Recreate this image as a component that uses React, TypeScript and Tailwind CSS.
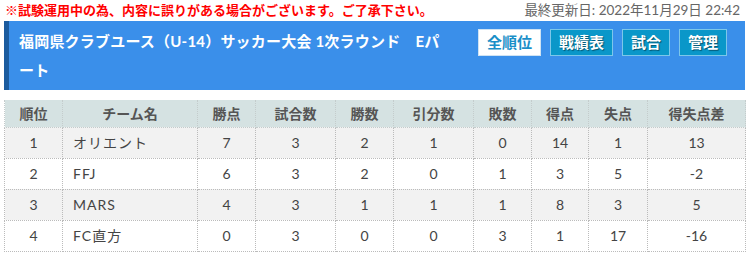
import React from 'react';

type Row = {
  rank: number;
  team: string;
  points: number;
  played: number;
  won: number;
  drawn: number;
  lost: number;
  gf: number;
  ga: number;
  gd: number;
};

const rows: Row[] = [
  { rank: 1, team: 'オリエント', points: 7, played: 3, won: 2, drawn: 1, lost: 0, gf: 14, ga: 1, gd: 13 },
  { rank: 2, team: 'FFJ', points: 6, played: 3, won: 2, drawn: 0, lost: 1, gf: 3, ga: 5, gd: -2 },
  { rank: 3, team: 'MARS', points: 4, played: 3, won: 1, drawn: 1, lost: 1, gf: 8, ga: 3, gd: 5 },
  { rank: 4, team: 'FC直方', points: 0, played: 3, won: 0, drawn: 0, lost: 3, gf: 1, ga: 17, gd: -16 },
];

const columns = ['順位', 'チーム名', '勝点', '試合数', '勝数', '引分数', '敗数', '得点', '失点', '得失点差'];
const widths = [58, 135, 58, 80, 58, 80, 58, 57, 59, 98];

const font = { fontFamily: 'Lato, "Noto Sans CJK JP", sans-serif' };

const NavButton: React.FC<{ label: string; active?: boolean }> = ({ label, active }) =>
  active ? (
    <button className="h-[27px] px-[8px] bg-white border border-[#cfe3f3] text-[#1a8fc8] text-[15px] font-bold leading-none">
      {label}
    </button>
  ) : (
    <button className="h-[27px] px-[8px] bg-[#0a97c9] border border-[#7cc7ea] text-white text-[15px] font-bold leading-none [text-shadow:1px_1px_1px_rgba(0,0,0,0.45)]">
      {label}
    </button>
  );

export default function App() {
  return (
    <div className="w-[750px] h-[257px] bg-white overflow-hidden" style={font}>
      {/* notice + updated */}
      <div className="h-[21px] flex items-center justify-between pl-[5px] pr-[10px]">
        <span className="text-[13px] font-bold text-[#ff0000] leading-none">
          ※試験運用中の為、内容に誤りがある場合がございます。ご了承下さい。
        </span>
        <span className="text-[13.5px] text-[#666666] leading-none">最終更新日: 2022年11月29日 22:42</span>
      </div>

      {/* title bar */}
      <div className="ml-[4px] w-[741px] h-[69px] bg-[#3a8fea] border-l-[5px] border-[#1b5b9e] flex justify-between pl-[10px] pr-[18px]">
        <h1 className="w-[428px] pt-[6px] text-white text-[15px] font-bold leading-[29px] tracking-[0.2px]">
          福岡県クラブユース（U-14）サッカー大会 1次ラウンド　Eパート
        </h1>
        <div className="flex gap-[9px] pt-[8px] items-start">
          <NavButton label="全順位" active />
          <NavButton label="戦績表" />
          <NavButton label="試合" />
          <NavButton label="管理" />
        </div>
      </div>

      {/* standings */}
      <table className="mt-[10px] ml-[4px] w-[741px] table-fixed border-collapse text-[14px]">
        <colgroup>
          {widths.map((w, i) => (
            <col key={i} style={{ width: w }} />
          ))}
        </colgroup>
        <thead>
          <tr className="h-[27px] bg-[#d5e2e2]">
            {columns.map((c) => (
              <th
                key={c}
                className="font-bold text-[#555555] text-center border border-dotted border-[#c4cccc] border-t-0"
              >
                {c}
              </th>
            ))}
          </tr>
        </thead>
        <tbody>
          {rows.map((r, i) => (
            <tr key={r.rank} className={i % 2 === 0 ? 'h-[31px] bg-[#f2f2f2]' : 'h-[31px] bg-white'}>
              <td className="text-center text-[#444444] border border-dotted border-[#bbbbbb]">{r.rank}</td>
              <td className="text-left pl-[10px] text-[#444444] border border-dotted border-[#bbbbbb] tracking-[1px]">{r.team}</td>
              <td className="text-center text-[#444444] border border-dotted border-[#bbbbbb]">{r.points}</td>
              <td className="text-center text-[#444444] border border-dotted border-[#bbbbbb]">{r.played}</td>
              <td className="text-center text-[#444444] border border-dotted border-[#bbbbbb]">{r.won}</td>
              <td className="text-center text-[#444444] border border-dotted border-[#bbbbbb]">{r.drawn}</td>
              <td className="text-center text-[#444444] border border-dotted border-[#bbbbbb]">{r.lost}</td>
              <td className="text-center text-[#444444] border border-dotted border-[#bbbbbb]">{r.gf}</td>
              <td className="text-center text-[#444444] border border-dotted border-[#bbbbbb]">{r.ga}</td>
              <td className="text-center text-[#444444] border border-dotted border-[#bbbbbb]">{r.gd}</td>
            </tr>
          ))}
        </tbody>
      </table>
    </div>
  );
}
